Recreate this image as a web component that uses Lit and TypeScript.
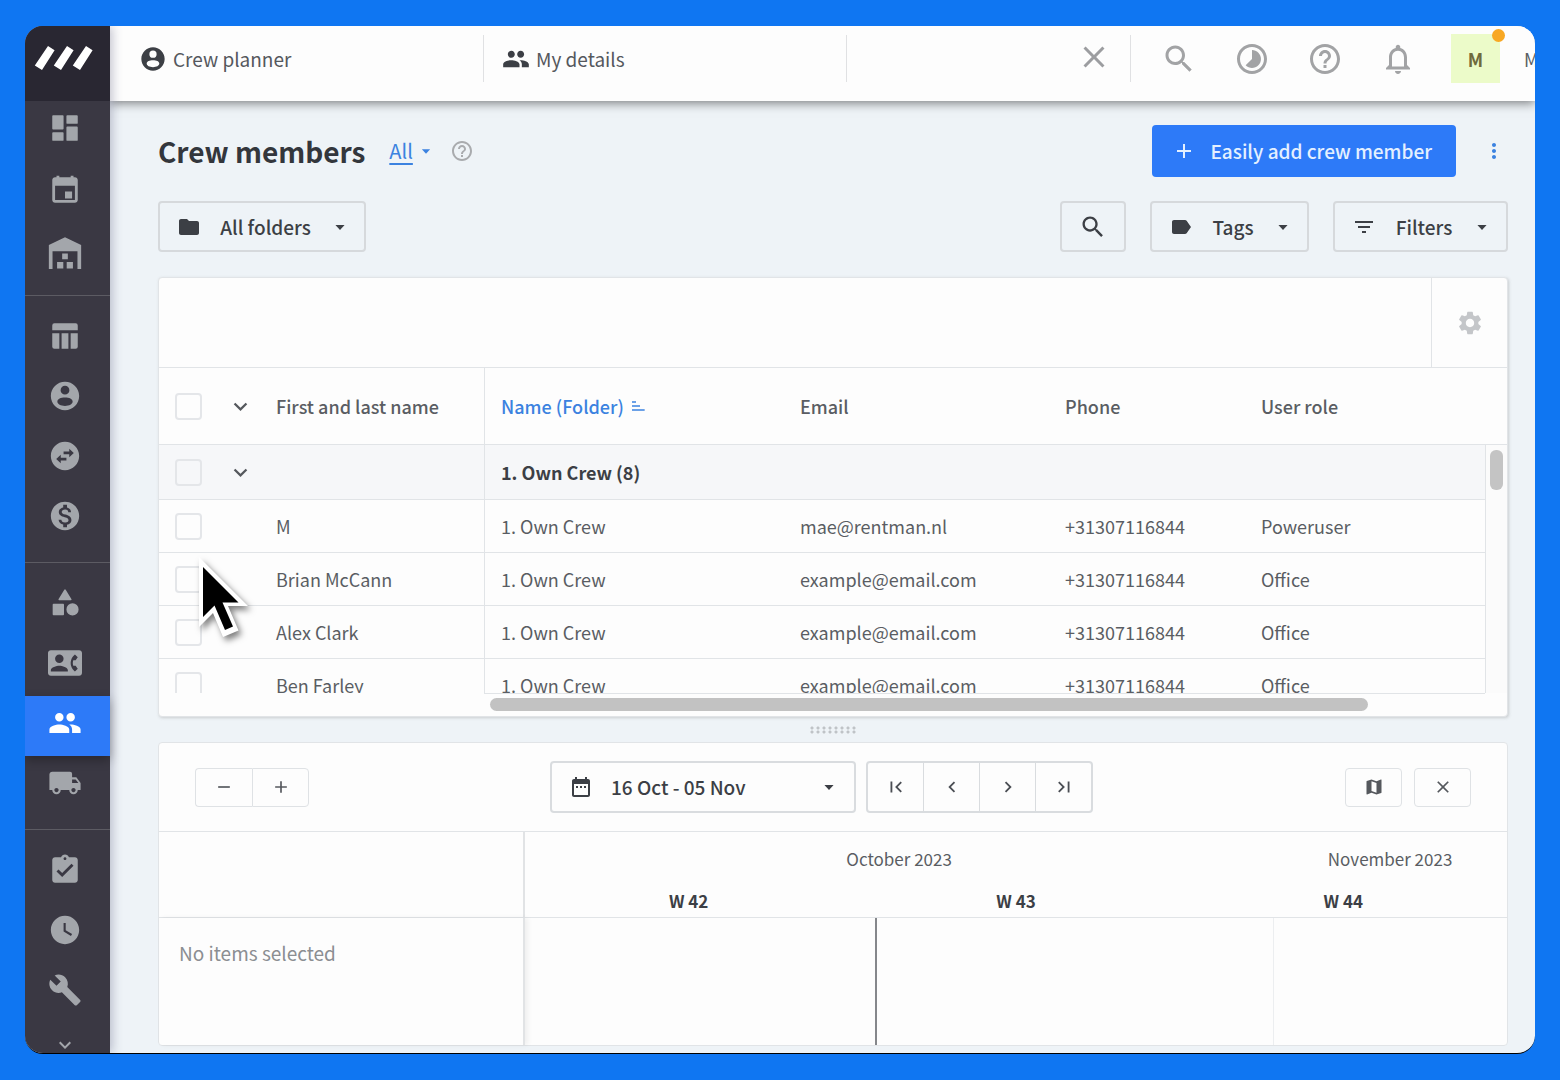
import { LitElement, html, css, svg } from "lit";
import { customElement, property } from "lit/decorators.js";
import { classMap } from "lit/directives/class-map.js";

const PATHS: Record<string, string> = {
  dashboard: "M3.6 3h6.8a.6.6 0 0 1 .6.6v8.8a.6.6 0 0 1-.6.6H3.6a.6.6 0 0 1-.6-.6V3.6A.6.6 0 0 1 3.6 3zM3.6 15h6.8a.6.6 0 0 1 .6.6v4.8a.6.6 0 0 1-.6.6H3.6a.6.6 0 0 1-.6-.6v-4.8a.6.6 0 0 1 .6-.6zM13.6 11h6.8a.6.6 0 0 1 .6.6v8.8a.6.6 0 0 1-.6.6h-6.8a.6.6 0 0 1-.6-.6v-8.8a.6.6 0 0 1 .6-.6zM13.6 3h6.8a.6.6 0 0 1 .6.6v4.8a.6.6 0 0 1-.6.6h-6.8a.6.6 0 0 1-.6-.6V3.6a.6.6 0 0 1 .6-.6z",
  event: "M17 13h-5v5h5v-5zM16 2v1H8V2H6v1H5c-1.11 0-1.99.9-1.99 2L3 19c0 1.1.89 2 2 2h14c1.1 0 2-.9 2-2V5c0-1.1-.9-2-2-2h-1V2h-2zm3 17H5V9h14v10z",
  warehouse: "M12 1.6L23.4 7v17h-2.6V11.400H3.200V24H.6V7L12 1.6zM10 13h4v4.200h-4zM6.400 19h4.400v4.600H6.400zM13.200 19h4.400v4.600h-4.400z",
  columns: "M4.500 3h15A1.500 1.500 0 0 1 21 4.500V8H3V4.500A1.500 1.500 0 0 1 4.500 3zM3 10h5v11H4.500A1.500 1.500 0 0 1 3 19.500zM9.600 10h4.800v11H9.600zM16 10h5v9.500a1.500 1.500 0 0 1-1.500 1.500H16z",
  account: "M12 2C6.480 2 2 6.480 2 12s4.480 10 10 10 10-4.480 10-10S17.520 2 12 2zM12 4.800a3.100 3.100 0 1 1 0 6.200 3.100 3.100 0 0 1 0-6.200zM12 13c3 0 5.400 1 5.400 2.900S15 19 12 19s-5.400-1.200-5.400-3.100S9 13 12 13z",
  swap: "M22 12c0-5.52-4.48-10-10-10S2 6.48 2 12s4.48 10 10 10 10-4.48 10-10zM15 6.8l3.200 3-3.200 3V10.800h-4V8.800h4zM9 17.200l-3.200-3 3.200-3V13.200h4v2H9z",
  dollar: "M12 2C6.48 2 2 6.48 2 12s4.48 10 10 10 10-4.48 10-10S17.52 2 12 2zm1.41 16.09V20h-2.67v-1.93c-1.71-.36-3.16-1.46-3.27-3.4h1.96c.1 1.05.82 1.87 2.65 1.87 1.96 0 2.4-.98 2.4-1.59 0-.83-.44-1.61-2.67-2.14-2.48-.6-4.18-1.62-4.18-3.67 0-1.72 1.39-2.84 3.11-3.21V4h2.67v1.95c1.86.45 2.79 1.86 2.85 3.39H14.3c-.05-1.11-.64-1.87-2.22-1.87-1.5 0-2.4.68-2.4 1.64 0 .84.65 1.39 2.67 1.91s4.18 1.39 4.18 3.91c-.01 1.83-1.38 2.83-3.12 3.16z",
  category: "M11.500 2.600a.6.600 0 0 1 1 0l4 6.600a.6.600 0 0 1-.5.900H8a.6.600 0 0 1-.5-.900zM3.900 12.600h6.800a.6.600 0 0 1 .6.600v6.800a.6.600 0 0 1-.6.600H3.900a.6.600 0 0 1-.6-.600v-6.800a.6.600 0 0 1 .6-.600zM17.300 12.200a4.300 4.300 0 1 1 0 8.600 4.300 4.300 0 0 1 0-8.600z",
  contact: "M22 3H2C.9 3 0 3.9 0 5v14c0 1.1.9 2 2 2h20c1.1 0 1.99-.9 1.99-2L24 5c0-1.1-.9-2-2-2zM8 6c1.66 0 3 1.34 3 3s-1.34 3-3 3-3-1.34-3-3 1.34-3 3-3zm6 12H2v-1c0-2 4-3.1 6-3.1s6 1.1 6 3.1v1zm3.85-4h1.64L21 16l-1.99 1.99c-1.31-.98-2.28-2.38-2.73-3.99-.18-.64-.28-1.31-.28-2s.1-1.36.28-2c.45-1.62 1.42-3.01 2.73-3.99L21 8l-1.51 2h-1.64c-.22.63-.35 1.3-.35 2s.13 1.37.35 2z",
  people: "M16 11c1.66 0 2.99-1.34 2.99-3S17.66 5 16 5c-1.66 0-3 1.34-3 3s1.34 3 3 3zm-8 0c1.66 0 2.99-1.34 2.99-3S9.66 5 8 5C6.34 5 5 6.34 5 8s1.34 3 3 3zm0 2c-2.33 0-7 1.17-7 3.5V19h14v-2.5c0-2.33-4.67-3.5-7-3.5zm8 0c-.29 0-.62.02-.97.05 1.16.84 1.97 1.97 1.97 3.45V19h6v-2.5c0-2.33-4.67-3.5-7-3.5z",
  truck: "M20 8h-3V5.500A1.500 1.500 0 0 0 15.500 4H3c-1.1 0-2 .9-2 2v11h2c0 1.66 1.34 3 3 3s3-1.34 3-3h6c0 1.66 1.34 3 3 3s3-1.34 3-3h2v-5l-3-4zM6 18.5c-.83 0-1.5-.67-1.5-1.5s.67-1.5 1.5-1.5 1.5.67 1.5 1.5-.67 1.5-1.5 1.5zm13.5-9l1.96 2.5H17V9.5h2.5zm-1.5 9c-.83 0-1.5-.67-1.5-1.5s.67-1.5 1.5-1.5 1.5.67 1.5 1.5-.67 1.5-1.5 1.5z",
  task: "M19 3h-4.18C14.4 1.84 13.3 1 12 1c-1.3 0-2.4.84-2.82 2H5c-1.1 0-2 .9-2 2v14c0 1.1.9 2 2 2h14c1.1 0 2-.9 2-2V5c0-1.1-.9-2-2-2zm-7 0c.55 0 1 .45 1 1s-.45 1-1 1-1-.45-1-1 .45-1 1-1zm-2 14l-4-4 1.41-1.41L10 14.17l6.59-6.59L18 9l-8 8z",
  clock: "M12 2C6.5 2 2 6.5 2 12s4.5 10 10 10 10-4.5 10-10S17.5 2 12 2zm4.2 14.2L11 13V7h1.5v5.2l4.5 2.7-.8 1.3z",
  wrench: "M22.7 19l-9.1-9.1c.9-2.3.4-5-1.5-6.9-2-2-5-2.4-7.4-1.3L9 6 6 9 1.6 4.7C.4 7.1.9 10.1 2.9 12.1c1.9 1.9 4.6 2.4 6.9 1.5l9.1 9.1c.4.4 1 .4 1.4 0l2.3-2.3c.5-.4.5-1.1.1-1.4z",
  chevronDown: "M7.41 8.59L12 13.17l4.59-4.58L18 10l-6 6-6-6z",
  chevronLeft: "M15.410 7.410L14 6l-6 6 6 6 1.410-1.410L10.830 12z",
  chevronRight: "M8.590 16.590L13.170 12 8.590 7.410 10 6l6 6-6 6z",
  first: "M18.410 16.590L13.820 12l4.590-4.590L17 6l-6 6 6 6zM6 6h2v12H6z",
  last: "M5.590 7.410L10.180 12l-4.590 4.590L7 18l6-6-6-6zM16 6h2v12h-2z",
  close: "M19 6.41L17.59 5 12 10.59 6.41 5 5 6.41 10.59 12 5 17.59 6.41 19 12 13.41 17.59 19 19 17.59 13.41 12z",
  search: "M15.5 14h-.79l-.28-.27C15.41 12.59 16 11.11 16 9.5 16 5.91 13.09 3 9.5 3S3 5.91 3 9.5 5.91 16 9.5 16c1.61 0 3.09-.59 4.23-1.57l.27.28v.79l5 4.99L20.49 19l-4.99-5zm-6 0C7.01 14 5 11.99 5 9.5S7.01 5 9.5 5 14 7.01 14 9.5 11.99 14 9.5 14z",
  timelapse: "M16.24 7.76C15.07 6.59 13.54 6 12 6v6l-4.24 4.24c2.34 2.34 6.14 2.34 8.49 0 2.34-2.34 2.34-6.14-.01-8.48zM12 2C6.48 2 2 6.48 2 12s4.48 10 10 10 10-4.48 10-10S17.52 2 12 2zm0 18c-4.42 0-8-3.58-8-8s3.58-8 8-8 8 3.58 8 8-3.58 8-8 8z",
  help: "M11 18h2v-2h-2v2zm1-16C6.48 2 2 6.48 2 12s4.48 10 10 10 10-4.48 10-10S17.52 2 12 2zm0 18c-4.41 0-8-3.59-8-8s3.59-8 8-8 8 3.59 8 8-3.59 8-8 8zm0-14c-2.21 0-4 1.79-4 4h2c0-1.1.9-2 2-2s2 .9 2 2c0 2-3 1.75-3 5h2c0-2.25 3-2.5 3-5 0-2.21-1.79-4-4-4z",
  bell: "M12 22c1.1 0 2-.9 2-2h-4c0 1.1.89 2 2 2zm6-6v-5c0-3.07-1.64-5.64-4.5-6.32V4c0-.83-.67-1.5-1.5-1.5s-1.5.67-1.5 1.5v.68C7.63 5.36 6 7.92 6 11v5l-2 2v1h16v-1l-2-2zm-2 1H8v-6c0-2.48 1.51-4.5 4-4.5s4 2.02 4 4.5v6z",
  caret: "M6.500 9.500h11L12 15.500z",
  folder: "M10 4H4c-1.1 0-1.99.9-1.99 2L2 18c0 1.1.9 2 2 2h16c1.1 0 2-.9 2-2V8c0-1.1-.9-2-2-2h-8l-2-2z",
  tag: "M17.63 5.84C17.27 5.33 16.67 5 16 5L5 5.01C3.9 5.01 3 5.9 3 7v10c0 1.1.9 1.99 2 1.99L16 19c.67 0 1.27-.33 1.63-.84L22 12l-4.37-6.16z",
  filter: "M10 18h4v-2h-4v2zM3 6v2h18V6H3zm3 7h12v-2H6v2z",
  plus: "M19 13h-6v6h-2v-6H5v-2h6V5h2v6h6z",
  minus: "M19 13H5v-2h14z",
  dots: "M12 8c1.1 0 2-.9 2-2s-.9-2-2-2-2 .9-2 2 .9 2 2 2zm0 2c-1.1 0-2 .9-2 2s.9 2 2 2 2-.9 2-2-.9-2-2-2zm0 6c-1.1 0-2 .9-2 2s.9 2 2 2 2-.9 2-2-.9-2-2-2z",
  gear: "M19.14 12.94c.04-.3.06-.61.06-.94 0-.32-.02-.64-.07-.94l2.03-1.58c.18-.14.23-.41.12-.61l-1.92-3.32c-.12-.22-.37-.29-.59-.22l-2.39.96c-.5-.38-1.03-.7-1.62-.94l-.36-2.54c-.04-.24-.24-.41-.48-.41h-3.84c-.24 0-.43.17-.47.41l-.36 2.54c-.59.24-1.13.57-1.62.94l-2.39-.96c-.22-.08-.47 0-.59.22L2.74 8.87c-.12.21-.08.47.12.61l2.03 1.58c-.05.3-.09.63-.09.94s.02.64.07.94l-2.03 1.58c-.18.14-.23.41-.12.61l1.92 3.32c.12.22.37.29.59.22l2.39-.96c.5.38 1.03.7 1.62.94l.36 2.54c.05.24.24.41.48.41h3.84c.24 0 .44-.17.47-.41l.36-2.54c.59-.24 1.13-.56 1.62-.94l2.39.96c.22.08.47 0 .59-.22l1.92-3.32c.12-.22.07-.47-.12-.61l-2.01-1.58zM12 15.6c-1.98 0-3.6-1.62-3.6-3.6s1.62-3.6 3.6-3.6 3.6 1.62 3.6 3.6-1.62 3.6-3.6 3.6z",
  calendar: "M9 11H7v2h2v-2zm4 0h-2v2h2v-2zm4 0h-2v2h2v-2zm2-7h-1V2h-2v2H8V2H6v2H5c-1.11 0-1.99.9-1.99 2L3 20c0 1.1.89 2 2 2h14c1.1 0 2-.9 2-2V6c0-1.1-.9-2-2-2zm0 16H5V9h14v11z",
  map: "M20.5 3l-.16.03L15 5.1 9 3 3.36 4.9c-.21.07-.36.25-.36.48V20.5c0 .28.22.5.5.5l.16-.03L9 18.900l6 2.100 5.640-1.900c.21-.07.36-.25.36-.48V3.5c0-.28-.22-.5-.5-.5zM15 19l-6-2.11V5l6 2.11V19z",
  sort: "M3 5h6v2H3zM3 11h12v2H3zM3 17h19v2H3z",
};

@customElement("ui-icon")
export class UiIcon extends LitElement {
  static styles = css`
    :host { display: inline-flex; flex: none; width: 24px; height: 24px; }
    .glyph { display: block; width: 100%; height: 100%; fill: currentColor; fill-rule: evenodd; overflow: visible; }
  `;

  @property() name = "";

  render() {
    return html`<svg class="glyph" viewBox="0 0 24 24" aria-hidden="true">${svg`<path d=${PATHS[this.name] ?? ""}></path>`}</svg>`;
  }
}

const NAV = [
  [["dashboard", "Dashboard"], ["event", "Calendar"], ["warehouse", "Warehouse"]],
  [["columns", "Projects"], ["account", "Crew planner"], ["swap", "Subrentals"], ["dollar", "Invoices"]],
  [["category", "Equipment"], ["contact", "Contacts"], ["people", "Crew members"], ["truck", "Vehicles"]],
  [["task", "Tasks"], ["clock", "Time registration"], ["wrench", "Maintenance"]],
];

const TOOLS = [["search", "Search"], ["timelapse", "Timer"], ["help", "Help"], ["bell", "Notifications"]];

const CREW = [
  { name: "M", email: "mae@rentman.nl", role: "Poweruser" },
  { name: "Brian McCann", email: "example@email.com", role: "Office" },
  { name: "Alex Clark", email: "example@email.com", role: "Office" },
  { name: "Ben Farley", email: "example@email.com", role: "Office" },
];

const DAYS = 21;
const NOW = 7.48;
const MONTH_END = 16;

@customElement("app-root")
export class AppRoot extends LitElement {
  static styles = css`
    :host {
      display: block;
      --line: #e1e4e7;
      --ink: #3c3f45;
      --text: #5a5d63;
      --blue: #2d7af8;
      --link: #3b82e0;
      font-family: "Noto Sans CJK SC", "Open Sans", sans-serif;
      font-size: 18px;
      line-height: 24px;
      color: var(--text);
    }
    * { box-sizing: border-box; }
    button { font: inherit; color: inherit; background: none; border: 0; padding: 0; margin: 0; cursor: pointer; }
    .stage { min-height: 100vh; padding: 26px 25px; background: #0f76f2; display: flex; }
    .window { flex: 1; min-width: 0; display: flex; border-radius: 18px; overflow: hidden; background: #eef3f7; border-bottom: 1px solid #000; }

    .side { flex: none; width: 85px; background: #3a3843; color: #a3a6ab; display: flex; flex-direction: column; position: relative; z-index: 3; box-shadow: 2px 0 10px rgba(50, 50, 90, 0.3); }
    .brand { height: 75px; background: #292732; color: #fff; display: flex; padding: 18px 0 0 9px; }
    .brand-mark { width: 60px; height: 28px; fill: currentColor; }
    .group { display: flex; flex-direction: column; padding: 13px 0; border-bottom: 1px solid #5c5b63; }
    .group:first-of-type { padding: 0 0 10px; gap: 2px; }
    .group:last-of-type { border-bottom: 0; padding-bottom: 0; }
    .nav { height: 60px; padding: 0 6px 6px 0; display: flex; align-items: center; justify-content: center; color: inherit; }
    .nav.active { background: var(--blue); color: #fff; box-shadow: 0 4px 10px rgba(0, 0, 0, 0.3); }
    .nav ui-icon { width: 34px; height: 34px; }
    .more { height: 30px; padding: 10px 6px 0 0; display: flex; justify-content: center; }
    .more ui-icon { width: 32px; height: 24px; }

    .main { flex: 1; min-width: 0; display: flex; flex-direction: column; }
    .top { height: 75px; flex: none; background: #fdfdfd; display: flex; align-items: flex-start; padding-top: 9px; box-shadow: 0 2px 10px rgba(0, 0, 0, 0.5); position: relative; z-index: 2; }
    .tab { height: 47px; display: flex; align-items: center; gap: 8px; border-right: 1px solid #e0e1e3; font-size: 19px; color: #55585d; text-decoration: none; }
    .tab ui-icon { width: 28px; height: 28px; color: var(--ink); }
    .tab.first { flex: 0 1 374px; padding-left: 29px; gap: 6px; }
    .tab.second { flex: 0 1 363px; padding-left: 18px; gap: 6px; }
    .tab.open { flex: 1 1 0; justify-content: flex-end; padding-right: 18px; }
    .tab.open ui-icon { width: 36px; height: 36px; color: #9c9da0; }
    .tools { display: flex; padding-left: 11px; height: 47px; }
    .tool { width: 73px; display: flex; align-items: center; justify-content: center; color: #a2a3a5; }
    .tool ui-icon { width: 36px; height: 36px; }
    .user { width: 101px; height: 57px; margin-top: -9px; padding: 8px 0 0 17px; display: flex; gap: 24px; overflow: hidden; align-items: center; font-size: 18px; }
    .avatar { flex: none; width: 49px; height: 49px; background: #ecfbc9; color: #6f6a3c; display: grid; place-items: center; font-weight: 700; position: relative; }
    .avatar::after { content: ""; position: absolute; right: -5px; top: -5px; width: 13px; height: 13px; border-radius: 50%; background: #f8a823; }

    .page { flex: 1; display: flex; flex-direction: column; padding: 24px 27px 7px 48px; min-height: 0; }
    .title-row { display: flex; align-items: center; height: 52px; }
    .title { margin: 0; font-size: 28px; line-height: 36px; font-weight: 700; color: #33363c; }
    .scope { display: flex; align-items: center; gap: 4px; margin-left: 24px; font-size: 20px; color: var(--link); }
    .scope-name { text-decoration: underline; text-underline-offset: 4px; text-decoration-thickness: 2px; }
    .scope ui-icon { width: 18px; height: 18px; }
    .hint { margin-left: 15px; color: #a9abae; display: flex; }
    .cta { margin-left: auto; height: 52px; padding: 0 24px 0 20px; display: flex; align-items: center; gap: 14px; background: var(--blue); color: #e4f0ff; border-radius: 4px; font-weight: 500; font-size: 19px; }
    .kebab { margin-left: 24px; width: 28px; display: flex; justify-content: center; color: var(--link); }
    .filter-row { display: flex; gap: 24px; margin-top: 24px; color: var(--ink); font-weight: 500; font-size: 19px; }
    .outline { height: 51px; display: flex; align-items: center; justify-content: space-between; border: 2px solid #d6d9dc; border-radius: 4px; padding: 0 14px 0 17px; }
    .outline ui-icon:last-child:not(:first-child) { width: 20px; height: 20px; }
    .w-folders { width: 208px; margin-right: auto; }
    .w-search { width: 66px; padding: 0; justify-content: center; }
    .w-search ui-icon { width: 28px; height: 28px; }
    .w-tags { width: 159px; }
    .w-filters { width: 175px; }

    .card { background: #fdfdfd; border: 1px solid var(--line); border-radius: 4px; }
    .crew { flex: 1 1 0; min-height: 200px; margin-top: 25px; display: flex; flex-direction: column; position: relative; box-shadow: 1px 1px 3px rgba(120, 120, 120, 0.3); }
    .crew-bar { flex: none; height: 90px; display: flex; justify-content: flex-end; border-bottom: 1px solid var(--line); }
    .gear { width: 76px; border-left: 1px solid var(--line); display: flex; align-items: center; justify-content: center; color: #c4c6c9; }
    .gear ui-icon { width: 28px; height: 28px; }
    .clip { flex: 1; min-height: 0; overflow: hidden; position: relative; }
    .crew-table { width: 100%; table-layout: fixed; border-collapse: separate; border-spacing: 0; }
    .crew-table th, .crew-table td { padding: 0 0 0 16px; text-align: left; font-weight: 400; height: 53px; border-bottom: 1px solid var(--line); overflow: hidden; white-space: nowrap; }
    .crew-table thead th { height: 77px; font-weight: 500; }
    .crew-table .edge { border-left: 1px solid var(--line); }
    .crew-table .sorted { color: var(--link); }
    .crew-table .folder-row td { height: 55px; background: #f6f7f9; font-weight: 700; color: var(--ink); }
    .c-check { width: 52px; }
    .c-fold { width: 49px; }
    .c-name { width: 224px; }
    .c-folder { width: 300px; }
    .c-email { width: 265px; }
    .c-phone { width: 196px; }
    .sort-btn { display: flex; align-items: center; gap: 6px; }
    .sort-btn ui-icon { width: 16px; height: 16px; }
    .check { appearance: none; display: block; margin: 0; width: 27px; height: 27px; border: 2px solid #e4e6e9; border-radius: 4px; background: transparent; }
    .fold { display: flex; color: #55585d; }
    .fold ui-icon { width: 27px; height: 27px; }
    .track-y { position: absolute; right: 0; top: 77px; bottom: 0; width: 22px; background: #fbfbfb; border-left: 1px solid var(--line); padding: 5px 4px 0; }
    .thumb-y { height: 40px; border-radius: 6px; background: #c4c4c4; }
    .track-x { flex: none; height: 22px; padding: 4px 139px 0 331px; }
    .track-x-line { margin-left: 325px; margin-right: 22px; border-top: 1px solid var(--line); }
    .thumb-x { height: 13px; border-radius: 7px; background: #c2c2c2; }
    .pointer { position: absolute; left: 36px; top: 277px; width: 60px; height: 86px; filter: drop-shadow(3px 4px 3px rgba(0, 0, 0, 0.5)); pointer-events: none; }

    .grip { height: 25px; display: grid; place-items: center; }
    .grip-dots { width: 48px; height: 8px; background-image: radial-gradient(circle, #bfc3c7 1px, transparent 2px); background-size: 6px 4px; }

    .plan-bar { height: 89px; padding: 0 36px; display: flex; align-items: center; justify-content: space-between; border-bottom: 1px solid var(--line); color: var(--ink); }
    .pair, .steps, .acts, .dates { display: flex; }
    .small { width: 57px; height: 39px; display: flex; align-items: center; justify-content: center; border: 1px solid #dfe2e5; border-radius: 4px; color: #55585d; }
    .small ui-icon { width: 20px; height: 20px; }
    .pair .small:first-child { border-radius: 4px 0 0 4px; border-right: 0; }
    .pair .small:last-child { border-radius: 0 4px 4px 0; }
    .acts { gap: 12px; }
    .dates { gap: 10px; margin-right: 11px; }
    .range { width: 306px; height: 52px; padding: 0 15px 0 17px; display: flex; align-items: center; gap: 18px; border: 2px solid #d9dcdf; border-radius: 4px; font-size: 19px; font-weight: 500; }
    .range ui-icon:last-child { margin-left: auto; width: 20px; height: 20px; }
    .steps { border: 2px solid #d9dcdf; border-radius: 4px; }
    .step { width: 55px; height: 48px; display: flex; align-items: center; justify-content: center; color: #4b4e54; }
    .step + .step { width: 56px; border-left: 1px solid #d9dcdf; }
    .step ui-icon { width: 22px; height: 22px; }
    .plan { display: grid; grid-template-columns: 366px minmax(0, 1fr); grid-template-rows: 86px 127px; }
    .plan-side { border-right: 2px solid #e1e3e5; border-bottom: 1px solid var(--line); }
    .plan-head { border-bottom: 1px solid var(--line); display: flex; flex-direction: column; padding-top: 15px; gap: 18px; font-size: 17px; }
    .months { display: grid; grid-template-columns: 16fr 5fr; text-align: center; }
    .weeks { display: grid; grid-template-columns: repeat(3, 1fr); text-align: center; font-weight: 700; color: var(--ink); }
    .plan-empty { padding: 23px 20px 0; border-right: 2px solid #e1e3e5; color: #8b8e92; font-size: 19px; box-shadow: 3px 0 5px rgba(0, 0, 0, 0.06); }
    .plan-body { position: relative; }
    .mark { position: absolute; top: 0; bottom: 0; width: 1px; background: #eceef0; }
    .mark.now { width: 2px; background: #85878b; }
  `;

  private rail() {
    return html`
      <nav class="side" aria-label="Modules">
        <div class="brand">
          <svg class="brand-mark" viewBox="0 0 60 28" role="img" aria-label="Rentman">
            <path d="M14 2l6.600 4.300L8 26 .800 21.400zM33 2l6.600 4.300L27 26l-7.200-4.600zM52 2l6.600 4.300L46 26l-7.200-4.600z"></path>
          </svg>
        </div>
        ${NAV.map((group) => html`
          <section class="group">
            ${group.map(([icon, label]) => html`
              <a href="#${icon}" class=${classMap({ nav: true, active: icon === "people" })} aria-label=${label}><ui-icon name=${icon}></ui-icon></a>`)}
          </section>`)}
        <button class="more" aria-label="More modules"><ui-icon name="chevronDown"></ui-icon></button>
      </nav>`;
  }

  private topBar() {
    return html`
      <header class="top">
        <a class="tab first" href="#planner"><ui-icon name="account"></ui-icon>Crew planner</a>
        <a class="tab second" href="#details"><ui-icon name="people"></ui-icon>My details</a>
        <div class="tab open"><button aria-label="Close tab"><ui-icon name="close"></ui-icon></button></div>
        <div class="tools">
          ${TOOLS.map(([icon, label]) => html`<button class="tool" aria-label=${label}><ui-icon name=${icon}></ui-icon></button>`)}
        </div>
        <div class="user"><span class="avatar">M</span><span>M</span></div>
      </header>`;
  }

  private crewTable() {
    return html`
      <table class="crew-table">
        <colgroup>
          <col class="c-check" /><col class="c-fold" /><col class="c-name" /><col class="c-folder" />
          <col class="c-email" /><col class="c-phone" /><col />
        </colgroup>
        <thead>
          <tr>
            <th><input class="check" type="checkbox" aria-label="Select all" /></th>
            <th><button class="fold" aria-label="Collapse all"><ui-icon name="chevronDown"></ui-icon></button></th>
            <th>First and last name</th>
            <th class="edge sorted"><button class="sort-btn">Name (Folder)<ui-icon name="sort"></ui-icon></button></th>
            <th>Email</th>
            <th>Phone</th>
            <th>User role</th>
          </tr>
        </thead>
        <tbody>
          <tr class="folder-row">
            <td><input class="check" type="checkbox" aria-label="Select 1. Own Crew" /></td>
            <td><button class="fold" aria-label="Collapse 1. Own Crew"><ui-icon name="chevronDown"></ui-icon></button></td>
            <td></td>
            <td class="edge" colspan="4">1. Own Crew (8)</td>
          </tr>
          ${CREW.map((c) => html`
            <tr>
              <td><input class="check" type="checkbox" aria-label="Select ${c.name}" /></td>
              <td></td>
              <td>${c.name}</td>
              <td class="edge">1. Own Crew</td>
              <td>${c.email}</td>
              <td>+31307116844</td>
              <td>${c.role}</td>
            </tr>`)}
        </tbody>
      </table>`;
  }

  private planner() {
    const at = (day: number) => `left:${(day / DAYS) * 100}%`;
    return html`
      <section class="card">
        <div class="plan-bar">
          <div class="pair">
            <button class="small" aria-label="Zoom out"><ui-icon name="minus"></ui-icon></button>
            <button class="small" aria-label="Zoom in"><ui-icon name="plus"></ui-icon></button>
          </div>
          <div class="dates">
            <button class="range"><ui-icon name="calendar"></ui-icon>16 Oct - 05 Nov<ui-icon name="caret"></ui-icon></button>
            <div class="steps">
              <button class="step" aria-label="First"><ui-icon name="first"></ui-icon></button>
              <button class="step" aria-label="Previous"><ui-icon name="chevronLeft"></ui-icon></button>
              <button class="step" aria-label="Next"><ui-icon name="chevronRight"></ui-icon></button>
              <button class="step" aria-label="Last"><ui-icon name="last"></ui-icon></button>
            </div>
          </div>
          <div class="acts">
            <button class="small" aria-label="Map"><ui-icon name="map"></ui-icon></button>
            <button class="small" aria-label="Close"><ui-icon name="close"></ui-icon></button>
          </div>
        </div>
        <div class="plan">
          <div class="plan-side"></div>
          <div class="plan-head">
            <div class="months"><span>October 2023</span><span>November 2023</span></div>
            <div class="weeks"><span>W 42</span><span>W 43</span><span>W 44</span></div>
          </div>
          <div class="plan-empty">No items selected</div>
          <div class="plan-body">
            <span class="mark now" style=${at(NOW)}></span>
            <span class="mark" style=${at(MONTH_END)}></span>
          </div>
        </div>
      </section>`;
  }

  render() {
    return html`
      <div class="stage">
        <div class="window">
          ${this.rail()}
          <div class="main">
            ${this.topBar()}
            <main class="page">
              <div class="title-row">
                <h1 class="title">Crew members</h1>
                <button class="scope"><span class="scope-name">All</span><ui-icon name="caret"></ui-icon></button>
                <button class="hint" aria-label="About crew members"><ui-icon name="help"></ui-icon></button>
                <button class="cta"><ui-icon name="plus"></ui-icon>Easily add crew member</button>
                <button class="kebab" aria-label="More actions"><ui-icon name="dots"></ui-icon></button>
              </div>
              <div class="filter-row">
                <button class="outline w-folders"><ui-icon name="folder"></ui-icon>All folders<ui-icon name="caret"></ui-icon></button>
                <button class="outline w-search" aria-label="Search crew"><ui-icon name="search"></ui-icon></button>
                <button class="outline w-tags"><ui-icon name="tag"></ui-icon>Tags<ui-icon name="caret"></ui-icon></button>
                <button class="outline w-filters"><ui-icon name="filter"></ui-icon>Filters<ui-icon name="caret"></ui-icon></button>
              </div>
              <section class="card crew">
                <div class="crew-bar"><button class="gear" aria-label="Table settings"><ui-icon name="gear"></ui-icon></button></div>
                <div class="clip">
                  ${this.crewTable()}
                  <div class="track-y"><div class="thumb-y"></div></div>
                </div>
                <div class="track-x-line"></div>
                <div class="track-x"><div class="thumb-x"></div></div>
                <svg class="pointer" viewBox="0 0 60 86" aria-hidden="true">
                  <path fill="#fff" d="M4 2v70l14-14 10 24 15.500-6.500L33 51h20z"></path>
                  <path fill="#000" d="M8 12v50l11.500-11.500L30 75l8-3.500L27.500 47.500H43.500z"></path>
                </svg>
              </section>
              <div class="grip"><div class="grip-dots"></div></div>
              ${this.planner()}
            </main>
          </div>
        </div>
      </div>`;
  }
}
